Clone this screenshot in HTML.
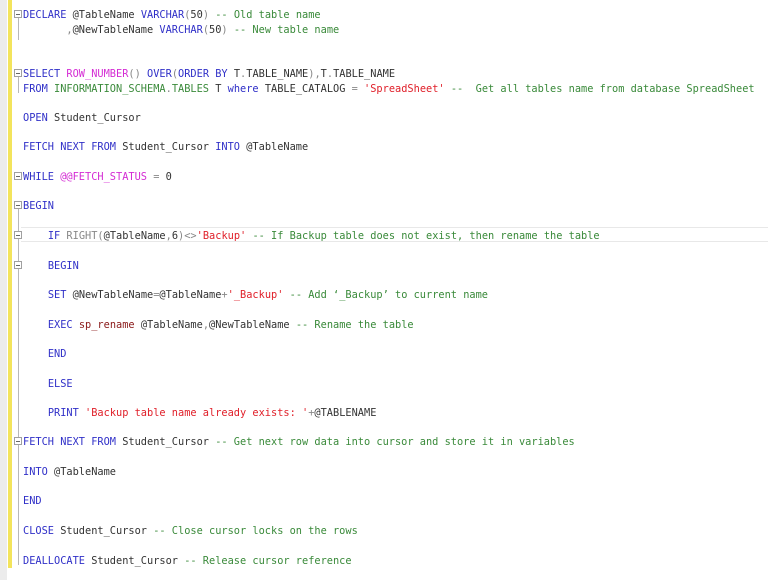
<!DOCTYPE html>
<html><head><meta charset="utf-8"><style>
html,body{margin:0;padding:0;width:768px;height:580px;overflow:hidden;background:#fff;}
.g{position:absolute;left:0;top:0;width:7px;height:580px;background:#ececec;}
.y{position:absolute;left:8px;top:0;width:4px;height:568px;background:#f3e45c;}
.fl{position:absolute;left:18px;width:1px;background:#b8b8b8;}
.fb{position:absolute;left:14px;width:6px;height:6px;border:1px solid #a0a0a0;background:#fff;box-sizing:content-box;}
.fb:after{content:"";position:absolute;left:1px;top:3px;width:4px;height:1px;background:#666;}
.l{position:absolute;left:23px;white-space:pre;font-family:"DejaVu Sans Mono","Liberation Mono",monospace;font-size:10.3px;line-height:14px;color:#333;}
.k{color:#3030c8}.m{color:#d42cd4}.c{color:#3a8a3a}.s{color:#e0202a}.o{color:#888}.r{color:#8b1a1a}
.hl{position:absolute;left:21px;top:227px;width:760px;height:15px;border-top:1px solid #e8e8e8;border-bottom:1px solid #e8e8e8;box-sizing:border-box;}
</style></head><body>
<div class="g"></div><div class="y"></div>
<div class="hl"></div>
<div class="fl" style="top:18px;height:22px"></div>
<div class="fl" style="top:77px;height:16px"></div>
<div class="fl" style="top:209px;height:356px"></div>
<div class="fb" style="top:10px"></div>
<div class="fb" style="top:69px"></div>
<div class="fb" style="top:172px"></div>
<div class="fb" style="top:201px"></div>
<div class="fb" style="top:231px"></div>
<div class="fb" style="top:261px"></div>
<div class="fb" style="top:437px"></div>
<div class="l" style="top:8px"><span class="k">DECLARE</span> @TableName <span class="k">VARCHAR</span><span class="o">(</span>50<span class="o">)</span> <span class="c">-- Old table name</span></div>
<div class="l" style="top:23px">       <span class="o">,</span>@NewTableName <span class="k">VARCHAR</span><span class="o">(</span>50<span class="o">)</span> <span class="c">-- New table name</span></div>
<div class="l" style="top:67px"><span class="k">SELECT</span> <span class="m">ROW_NUMBER</span><span class="o">()</span> <span class="k">OVER</span><span class="o">(</span><span class="k">ORDER BY</span> T<span class="o">.</span>TABLE_NAME<span class="o">),</span>T<span class="o">.</span>TABLE_NAME</div>
<div class="l" style="top:82px"><span class="k">FROM</span> <span class="c">INFORMATION_SCHEMA</span><span class="o">.</span><span class="c">TABLES</span> T <span class="k">where</span> TABLE_CATALOG <span class="o">=</span> <span class="s">'SpreadSheet'</span> <span class="c">--  Get all tables name from database SpreadSheet</span></div>
<div class="l" style="top:111px"><span class="k">OPEN</span> Student_Cursor</div>
<div class="l" style="top:140px"><span class="k">FETCH NEXT FROM</span> Student_Cursor <span class="k">INTO</span> @TableName</div>
<div class="l" style="top:170px"><span class="k">WHILE</span> <span class="m">@@FETCH_STATUS</span> <span class="o">=</span> 0</div>
<div class="l" style="top:199px"><span class="k">BEGIN</span></div>
<div class="l" style="top:229px">    <span class="k">IF</span> <span class="o">RIGHT(</span>@TableName<span class="o">,</span>6<span class="o">)&lt;&gt;</span><span class="s">'Backup'</span> <span class="c">-- If Backup table does not exist, then rename the table</span></div>
<div class="l" style="top:259px">    <span class="k">BEGIN</span></div>
<div class="l" style="top:288px">    <span class="k">SET</span> @NewTableName<span class="o">=</span>@TableName<span class="o">+</span><span class="s">'_Backup'</span> <span class="c">-- Add ‘_Backup’ to current name</span></div>
<div class="l" style="top:318px">    <span class="k">EXEC</span> <span class="r">sp_rename</span> @TableName<span class="o">,</span>@NewTableName <span class="c">-- Rename the table</span></div>
<div class="l" style="top:347px">    <span class="k">END</span></div>
<div class="l" style="top:377px">    <span class="k">ELSE</span></div>
<div class="l" style="top:406px">    <span class="k">PRINT</span> <span class="s">'Backup table name already exists: '</span><span class="o">+</span>@TABLENAME</div>
<div class="l" style="top:435px"><span class="k">FETCH NEXT FROM</span> Student_Cursor <span class="c">-- Get next row data into cursor and store it in variables</span></div>
<div class="l" style="top:465px"><span class="k">INTO</span> @TableName</div>
<div class="l" style="top:494px"><span class="k">END</span></div>
<div class="l" style="top:524px"><span class="k">CLOSE</span> Student_Cursor <span class="c">-- Close cursor locks on the rows</span></div>
<div class="l" style="top:554px"><span class="k">DEALLOCATE</span> Student_Cursor <span class="c">-- Release cursor reference</span></div>
</body></html>
